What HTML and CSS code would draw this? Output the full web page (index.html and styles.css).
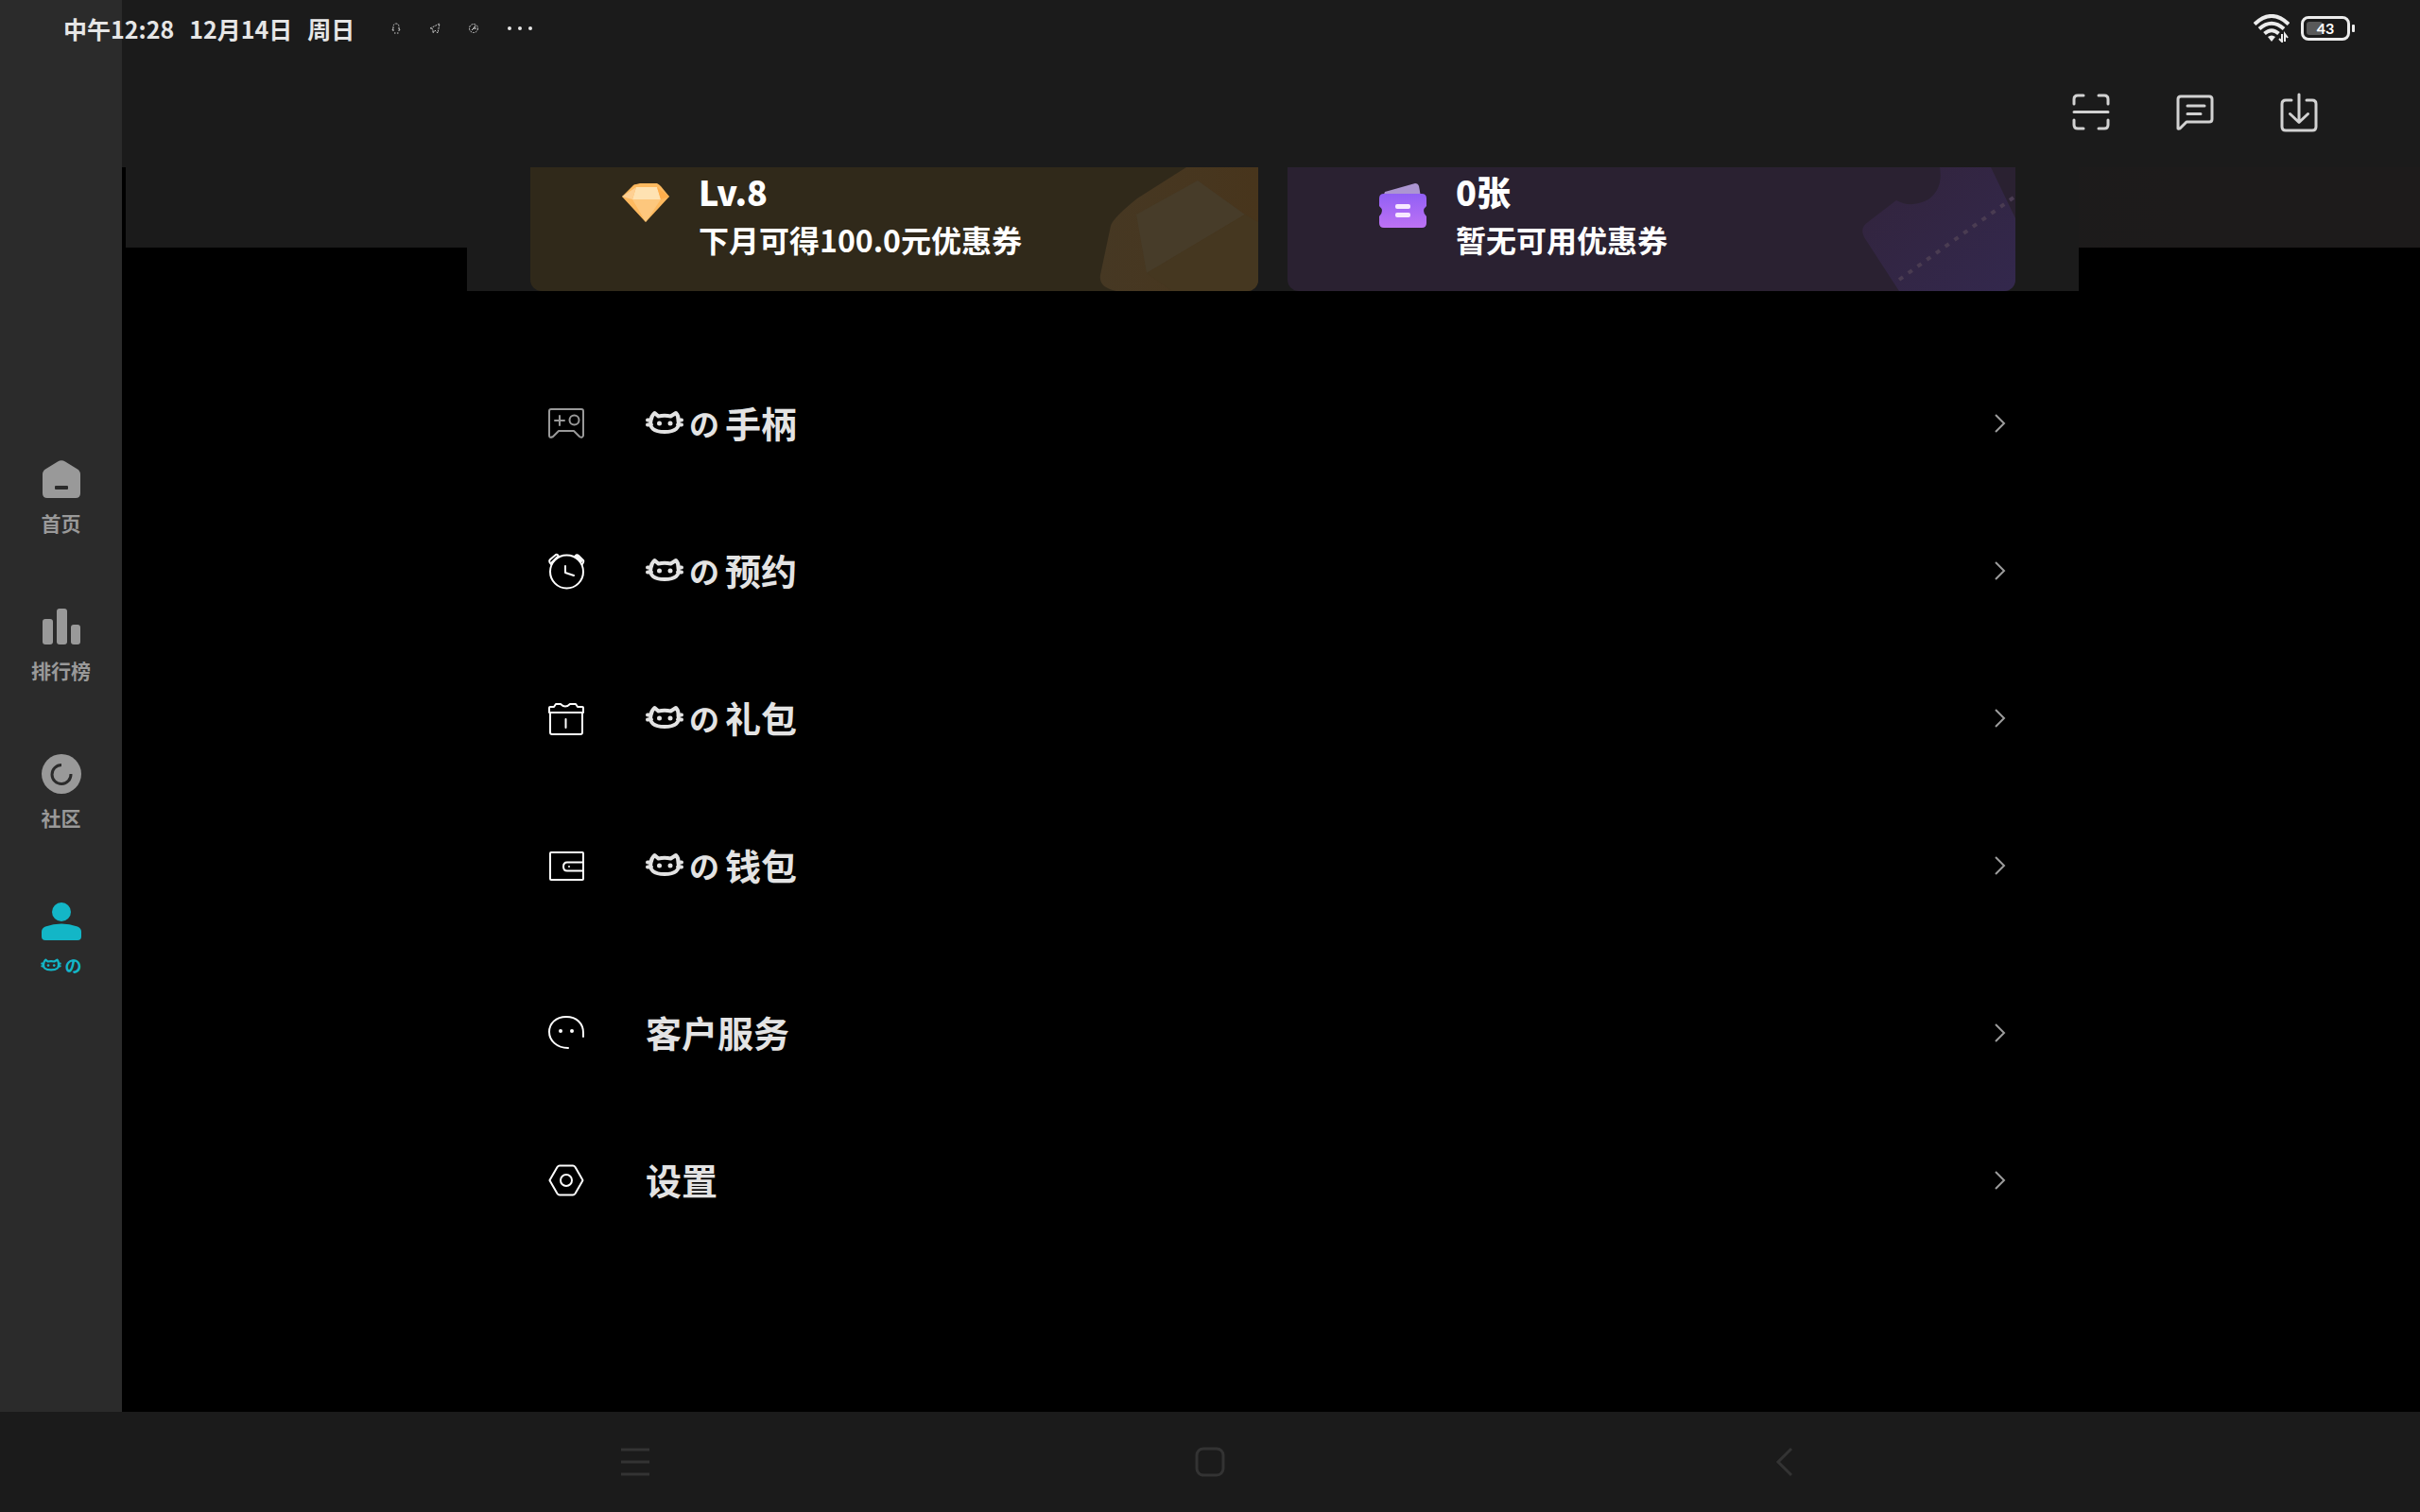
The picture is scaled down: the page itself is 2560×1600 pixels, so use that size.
FILE: index.html
```html
<!DOCTYPE html>
<html lang="zh-CN">
<head>
<meta charset="utf-8">
<title>我的</title>
<link rel="stylesheet" href="styles.css">
</head>
<body>
<svg class="defs" aria-hidden="true">
  <symbol id="cat" viewBox="0 0 40 26">
    <g fill="none" stroke="currentColor" stroke-width="4" stroke-linecap="round" stroke-linejoin="round">
      <path d="M5.500 11Q6 6 9.500 3L13.500 6.500Q20 5 26.500 6.500L32 3Q35 6 34.500 11Q37 23 20 23Q3 23 5.500 11M2 10.500H5M2 15.500H6M38 10.500H35M38 15.500H34"/>
    </g>
    <circle cx="14.500" cy="14" r="2.500" fill="currentColor"/><circle cx="26" cy="14" r="2.500" fill="currentColor"/>
  </symbol>
  <symbol id="chevron" viewBox="0 0 14 22"><path d="M2 2l9 9-9 9" fill="none" stroke="currentColor" stroke-width="2"/></symbol>
</svg>

<header class="status">
  <div class="clock"><span>中午12:28</span><span>12月14日</span><span>周日</span></div>
  <div class="notices">
    <svg width="12" height="12" viewBox="0 0 12 12"><path d="M3 9V4.500Q3 1 6 1T9 4.500V9M2 8l1-2M10 8L9 6M4 11h1.500M7 11h1.500" fill="none" stroke="#ccc" stroke-dasharray="2 1"/></svg>
    <svg width="12" height="12" viewBox="0 0 12 12"><path d="M1 6 11 1 9 11 6 8 4 11V7Z" fill="none" stroke="#ccc" stroke-dasharray="2 1"/></svg>
    <svg width="12" height="12" viewBox="0 0 12 12"><circle cx="6" cy="6" r="4.500" fill="none" stroke="#ccc" stroke-dasharray="2 1"/><path d="M4 8l2-2h3M6 6l2-3" fill="none" stroke="#ddd"/></svg>
    <svg class="more" width="28" height="6" viewBox="0 0 28 6"><g fill="#e6e6e6"><circle cx="3" cy="3" r="2"/><circle cx="14" cy="3" r="2"/><circle cx="25" cy="3" r="2"/></g></svg>
  </div>
  <div class="system">
    <svg width="38" height="30" viewBox="0 0 38 30"><g fill="none" stroke="#ececec" stroke-width="4"><path d="M1 10.500Q19-6.500 37 10.500M6 15.500Q19 4 32 15.500M11.500 20.500Q19 14 26.500 20.500"/></g><path d="M15 24q4-3 8 0l-4 5z" fill="#ececec"/><path d="M30 21v8l-3-3M33 29v-8l3 4" fill="none" stroke="#ececec" stroke-width="2"/></svg>
    <span class="battery"><span class="level"></span><span class="percent">43</span></span>
  </div>
</header>

<div class="app">
  <nav class="side">
    <a href="#home"><svg width="42" height="42" viewBox="0 0 42 42"><path d="M17 2.500Q21 0 25 2.500L38 10.500Q41 12.500 41 16V36Q41 41 36 41H6Q1 41 1 36V16Q1 12.500 4 10.500Z" fill="currentColor"/><rect x="14" y="28" width="14" height="4" rx="1" fill="#2b2b2b"/></svg><span>首页</span></a>
    <a href="#rank"><svg width="42" height="42" viewBox="0 0 42 42"><g fill="currentColor"><rect x="1" y="13" width="11" height="27" rx="3"/><rect x="16" y="2" width="11" height="38" rx="3"/><rect x="31" y="19" width="10" height="21" rx="3"/></g></svg><span>排行榜</span></a>
    <a href="#community"><svg width="42" height="42" viewBox="0 0 42 42"><circle cx="21" cy="21" r="21" fill="currentColor"/><path d="M21 11.500A10 10 0 1 0 31 21" fill="none" stroke="#2b2b2b" stroke-width="3"/></svg><span>社区</span></a>
    <a href="#mine" class="current" aria-label="我的"><svg width="42" height="42" viewBox="0 0 42 42"><circle cx="21" cy="11" r="10" fill="currentColor"/><path d="M0 32Q0 28 4 26.500 21 20.500 38 26.500 42 28 42 32V37Q42 41 38 41H4Q0 41 0 37Z" fill="currentColor"/></svg><span class="mine"><svg class="cat"><use href="#cat"/></svg><span class="no">の</span></span></a>
  </nav>

  <main>
    <div class="tools">
      <button aria-label="扫一扫"><svg width="40" height="40" viewBox="0 0 40 40"><path d="M2 11V6Q2 2 6 2H12M28 2H34Q38 2 38 6V11M38 28V33Q38 37 34 37H28M12 37H6Q2 37 2 33V28M2 19.500H38"/></svg></button>
      <button aria-label="消息"><svg width="40" height="40" viewBox="0 0 40 40"><path d="M2 37V6Q2 3 5 3H35Q38 3 38 6V27Q38 30 35 30H11L4 37Q2 38 2 36M12 13H30M12 21.500H26"/></svg></button>
      <button aria-label="下载"><svg width="40" height="42" viewBox="0 0 40 42"><path d="M12 8H6Q2 8 2 12V36Q2 40 6 40H34Q38 40 38 36V12Q38 8 34 8H28M20 2V31M10.500 22.500 20 31.500 29.500 22.500"/></svg></button>
    </div>

    <section class="banner">
      <div class="cards">
        <a class="card gold" href="#level">
          <svg class="art" viewBox="0 0 168 131"><defs><linearGradient id="gd" x2="1" y2="0"><stop offset="0" stop-color="#463823"/><stop offset="1" stop-color="#48351c"/></linearGradient></defs><path d="M92 0H168V131H18Q-1 127 1 114L12 62Q14 54 40 33Z" fill="url(#gd)"/><path d="M104 14 39 50 50 112 154 50Z" fill="#473c29"/><path d="M50 112 154 50 168 58V131H77Z" fill="#453720"/></svg>
          <svg class="badge" width="52" height="42" viewBox="0 0 52 42"><path d="M13 2Q14 1 16 1L20 0H38Q40 1 42 3L51 14 27 40Q26 41 25 40L1 14Z" fill="#fdb95f"/><path d="M16 4H38L42 17H12Z" fill="#fee2b2"/><path d="M12 17H42L26 41Z" fill="#fdc77d"/><path d="M38 4 51 14 42 17Z" fill="#ffae4c"/><path d="M16 4 1 14 12 17Z" fill="#fed093"/></svg>
          <div class="info"><strong>Lv.8</strong><span>下月可得100.0元优惠券</span></div>
        </a>
        <a class="card violet" href="#coupon">
          <svg class="art" viewBox="0 0 168 131"><defs><linearGradient id="tk" x2="1" y2="1"><stop offset="0" stop-color="#32243c"/><stop offset="1" stop-color="#33284d"/></linearGradient></defs><path d="M88 0H142L168 54V131H45L8 74Q3 64 12 58L42 35Q58 44 76 34 92 22 88 0Z" fill="url(#tk)"/><path d="M45 119 166 32" stroke="#4a3c52" stroke-width="4" stroke-dasharray="5 7"/></svg>
          <svg class="badge" width="52" height="48" viewBox="0 0 52 48"><defs><linearGradient id="cp" x2="0" y2="1"><stop offset="0" stop-color="#9160f5"/><stop offset="1" stop-color="#bd72f4"/></linearGradient></defs><path d="M7 9 39 0Q42 0 43 3L45 14H5Z" fill="#ac95d2"/><path d="M6 11H46Q51 11 51 16V24Q45 29 51 35V42Q51 47 46 47H6Q1 47 1 42V35Q7 29 1 24V16Q1 11 6 11Z" fill="url(#cp)"/><rect x="18" y="22" width="16" height="5" rx="2" fill="#f7e8ff"/><rect x="18" y="31" width="16" height="5" rx="2" fill="#f7e8ff"/></svg>
          <div class="info"><strong>0张</strong><span>暂无可用优惠券</span></div>
        </a>
      </div>
    </section>

    <div class="menu">
      <ul>
        <li><a href="#gamepad" aria-label="我的手柄"><svg class="icon dim" viewBox="0 0 40 40"><path d="M4 5H36Q38 5 38 7V33Q37 36 34 34L28 28H12L6 34Q2 36 2 33V7Q2 5 4 5ZM8 17H18M13 12V22"/><circle cx="28.500" cy="16.500" r="5"/></svg><span class="label"><svg class="cat"><use href="#cat"/></svg><span class="no">の</span>手柄</span><svg class="go"><use href="#chevron"/></svg></a></li>
        <li><a href="#booking" aria-label="我的预约"><svg class="icon" viewBox="0 0 40 40"><circle cx="20.500" cy="21" r="17.500"/><path d="M19 15V22L28 25M4 13Q1 10 3 8L9 3Q11 2 12 5M29 5Q31 2 33 4L38 9Q39 10 37 13M5 11 11 5M31 5 36 10"/></svg><span class="label"><svg class="cat"><use href="#cat"/></svg><span class="no">の</span>预约</span><svg class="go"><use href="#chevron"/></svg></a></li>
        <li><a href="#gift" aria-label="我的礼包"><svg class="icon" viewBox="0 0 40 40"><path d="M3 15V35Q3 37 5 37H35Q37 37 37 35V15M2 14V9Q2 8 3 8H7L9 5H14Q19 10 24 5H30L32 8H37Q38 8 38 9V14ZM19.500 21V30"/></svg><span class="label"><svg class="cat"><use href="#cat"/></svg><span class="no">の</span>礼包</span><svg class="go"><use href="#chevron"/></svg></a></li>
        <li><a href="#wallet" aria-label="我的钱包"><svg class="icon" viewBox="0 0 40 40"><rect x="3" y="6" width="35" height="29" rx="1"/><path d="M38 16.500H21Q17 16.500 17 21T21 25.500H38"/><circle cx="23" cy="21" r="1" fill="#fff" stroke="none"/></svg><span class="label"><svg class="cat"><use href="#cat"/></svg><span class="no">の</span>钱包</span><svg class="go"><use href="#chevron"/></svg></a></li>
      </ul>
      <ul>
        <li><a href="#service"><svg class="icon" viewBox="0 0 40 40"><path d="M38 24V20C38 10 31 3 20 3S2 10 2 19 10 36 22 36"/><circle cx="14" cy="18" r="2" fill="#fff" stroke="none"/><circle cx="26" cy="18" r="2" fill="#fff" stroke="none"/></svg><span class="label">客户服务</span><svg class="go"><use href="#chevron"/></svg></a></li>
        <li><a href="#settings"><svg class="icon" viewBox="0 0 40 40"><path d="M13 4.500H27Q28.500 4.500 29.500 6L37 19Q38 20 37 21L29.500 34Q28.500 35.500 27 35.500H13Q11.500 35.500 10.500 34L3 21Q2 20 3 19L10.500 6Q11.500 4.500 13 4.500Z"/><circle cx="20" cy="20" r="6"/></svg><span class="label">设置</span><svg class="go"><use href="#chevron"/></svg></a></li>
      </ul>
    </div>
  </main>
</div>

<footer class="keys">
  <button aria-label="最近任务"><svg width="32" height="32" viewBox="0 0 32 32"><path d="M1 3H31M1 16H31M1 29H31"/></svg></button>
  <button aria-label="主页"><svg width="32" height="32" viewBox="0 0 32 32"><rect x="2" y="2" width="28" height="28" rx="7"/></svg></button>
  <button aria-label="返回"><svg width="32" height="32" viewBox="0 0 32 32"><path d="M23 2 9 16 23 30"/></svg></button>
</footer>
</body>
</html>
```
FILE: styles.css
```css
* { box-sizing: border-box; }

body {
  margin: 0;
  min-height: 100vh;
  display: flex;
  flex-direction: column;
  background: #000;
  color: #e3e3e3;
  font-family: "Noto Sans CJK SC", sans-serif;
  font-weight: 700;
}

a { color: inherit; text-decoration: none; }
ul { margin: 0; padding: 0; list-style: none; }
svg { display: block; flex: none; }
button { padding: 0; border: 0; background: none; }
.defs { position: absolute; width: 0; height: 0; }

/* The status bar floats over the side bar and the page */
.status {
  position: absolute;
  inset: 0 0 auto 0;
  height: 60px;
  padding: 0 74px 0 67px;
  display: flex;
  align-items: center;
}
.clock { display: flex; gap: 16px; font-size: 25px; line-height: 36px; color: #e6e6e6; }
.notices { display: flex; align-items: center; gap: 29px; margin-left: 38px; }
.system { display: flex; align-items: center; gap: 12px; margin-left: auto; }
.battery {
  position: relative;
  width: 52px;
  height: 26px;
  display: flex;
  align-items: center;
  justify-content: center;
  border: 3px solid #ececec;
  border-radius: 8px;
}
.battery::after {
  content: "";
  position: absolute;
  right: -8px;
  top: 6px;
  width: 3px;
  height: 8px;
  border-radius: 1px;
  background: #ececec;
}
.level { position: absolute; left: 3px; top: 3px; width: 17px; height: 14px; border-radius: 3px; background: #595959; }
.percent { position: relative; font: 700 16px/20px Lato, sans-serif; color: #fff; }

.app { flex: 1; display: flex; }

.side {
  width: 129px;
  padding-top: 28px;
  display: flex;
  flex-direction: column;
  justify-content: center;
  gap: 74px;
  background: #2b2b2b;
  color: #999;
}
.side a { display: flex; flex-direction: column; align-items: center; gap: 10px; font-size: 21px; line-height: 30px; }
.side .current { color: #13b6c7; }
.mine { display: flex; align-items: center; gap: 4px; }
.mine .cat { width: 22px; height: 14px; }
.mine .no { font-size: 18px; }

main { flex: 1; }
.tools {
  height: 177px;
  padding: 60px 108px 0;
  display: flex;
  align-items: center;
  justify-content: flex-end;
  gap: 70px;
  background: #1b1b1b;
}
.tools svg { fill: none; stroke: #d2d2d2; stroke-width: 3; stroke-linecap: round; stroke-linejoin: round; }

.banner { margin-left: 4px; background: linear-gradient(90deg, #1b1b1b 70%, #1d1b1b 90%) top / 100% 85px no-repeat; }
.cards {
  margin: 0 361px;
  padding: 0 67px;
  display: flex;
  gap: 31px;
  background: #1b1b1b;
}
.card {
  position: relative;
  flex: 1;
  height: 131px;
  padding: 6px 0 0 96px;
  display: flex;
  gap: 30px;
  overflow: hidden;
  border-radius: 0 0 12px 12px;
  color: #fff;
}
.gold { background: #30291a; }
.violet { background: #2a2131; }
.art { position: absolute; right: 0; top: 0; height: 131px; }
.badge { position: relative; margin-top: 11px; }
.info { position: relative; display: flex; flex-direction: column; }
.info strong { font-size: 36px; line-height: 38px; }
.info span { font-size: 32px; line-height: 64px; }

.menu { display: flex; flex-direction: column; gap: 21px; margin: 62px 432px 0; }
.menu a { height: 156px; padding: 0 5px 0 18px; display: flex; align-items: center; }
.icon { width: 40px; height: 40px; fill: none; stroke: #fff; stroke-width: 2; stroke-linecap: round; stroke-linejoin: round; }
.dim { stroke: #999; }
.label { display: flex; align-items: center; margin: 0 auto 2px 64px; font-size: 38px; line-height: 56px; }
.label .cat { width: 40px; height: 26px; }
.label .no { width: 44px; font-size: 32px; text-align: center; }
.go { width: 14px; height: 22px; color: #9c9c9c; }

.keys {
  height: 106px;
  display: flex;
  justify-content: space-between;
  align-items: center;
  padding: 0 656px;
  background: #1b1b1b;
}
.keys svg { fill: none; stroke: #333; stroke-width: 3; }
```
